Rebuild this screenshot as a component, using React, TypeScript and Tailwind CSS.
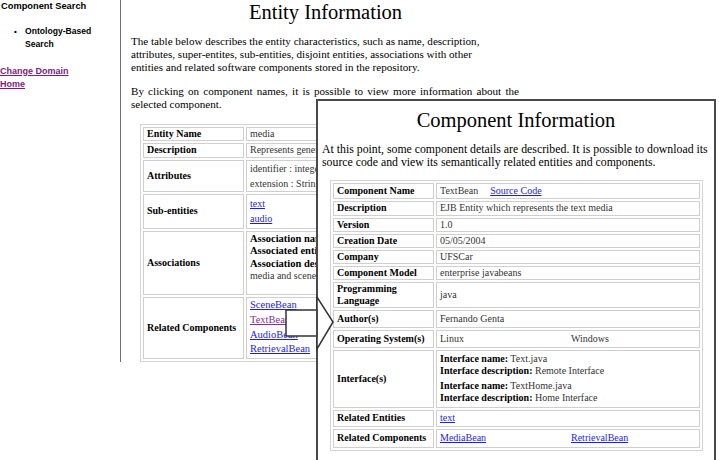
import React from "react";

const serif = { fontFamily: '"Liberation Serif", "Times New Roman", serif' };
const sans = { fontFamily: '"Liberation Sans", Arial, sans-serif' };

function Label({ children, h }: { children: React.ReactNode; h: string }) {
  return (
    <td
      className={`border border-[#cfcfcf] px-[3px] py-0 align-middle font-bold text-[10px] leading-[12px] text-black whitespace-nowrap ${h}`}
      style={serif}
    >
      {children}
    </td>
  );
}

function Val({ children, top = false }: { children: React.ReactNode; top?: boolean }) {
  return (
    <td
      className={`border border-[#cfcfcf] px-[3px] py-0 text-[10px] leading-[12px] text-[#333] ${
        top ? "align-top" : "align-middle"
      }`}
      style={serif}
    >
      {children}
    </td>
  );
}

function Link({ children, visited = false }: { children: React.ReactNode; visited?: boolean }) {
  return (
    <a className={`underline ${visited ? "text-[#8e2c8e]" : "text-[#1c1cf0]"}`} href="#">
      {children}
    </a>
  );
}

function EntityTable() {
  return (
    <div className="mt-[13px] ml-[9px] w-[176px] overflow-hidden">
      <table
        className="w-[380px] border-separate border-spacing-[2px] border border-[#d4d4d4]"
        style={serif}
      >
        <tbody>
          <tr>
            <Label h="h-[14px] w-[101px]">Entity Name</Label>
            <Val>media</Val>
          </tr>
          <tr>
            <Label h="h-[15px]">Description</Label>
            <Val>
              <span className="whitespace-nowrap">Represents general media components</span>
            </Val>
          </tr>
          <tr>
            <Label h="h-[32px]">Attributes</Label>
            <Val>
              <div className="leading-[15px]">identifier : integer</div>
              <div className="leading-[15px]">extension : String</div>
            </Val>
          </tr>
          <tr>
            <Label h="h-[35px]">Sub-entities</Label>
            <Val>
              <div className="leading-[15px]">
                <Link>text</Link>
              </div>
              <div className="leading-[15px]">
                <Link>audio</Link>
              </div>
            </Val>
          </tr>
          <tr>
            <Label h="h-[64px]">Associations</Label>
            <Val top>
              <div className="pt-[1px] leading-[12.5px] whitespace-nowrap">
                <div className="font-bold text-black text-[10.5px]">Association name: composition</div>
                <div className="font-bold text-black text-[10.5px]">Associated entity: scene</div>
                <div className="font-bold text-black text-[10.5px]">Association description:</div>
                <div>media and scene relationship</div>
              </div>
            </Val>
          </tr>
          <tr>
            <Label h="h-[62px]">Related Components</Label>
            <Val>
              <div className="leading-[14.7px] text-[10.5px]">
                <div>
                  <Link>SceneBean</Link>
                </div>
                <div>
                  <Link visited>TextBean</Link>
                </div>
                <div>
                  <Link>AudioBean</Link>
                </div>
                <div>
                  <Link>RetrievalBean</Link>
                </div>
              </div>
            </Val>
          </tr>
        </tbody>
      </table>
    </div>
  );
}

function ComponentTable() {
  return (
    <table
      className="mt-[11px] ml-[12px] w-[373px] border-separate border-spacing-[2px] border border-[#d4d4d4]"
      style={serif}
    >
      <tbody>
        <tr>
          <Label h="h-[16px] w-[101px]">Component Name</Label>
          <Val>
            TextBean<span className="inline-block w-[12px]" />
            <Link>Source Code</Link>
          </Val>
        </tr>
        <tr>
          <Label h="h-[15px]">Description</Label>
          <Val>EJB Entity which represents the text media</Val>
        </tr>
        <tr>
          <Label h="h-[14px]">Version</Label>
          <Val>1.0</Val>
        </tr>
        <tr>
          <Label h="h-[14px]">Creation Date</Label>
          <Val>05/05/2004</Val>
        </tr>
        <tr>
          <Label h="h-[14px]">Company</Label>
          <Val>UFSCar</Val>
        </tr>
        <tr>
          <Label h="h-[14px]">Component Model</Label>
          <Val>enterprise javabeans</Val>
        </tr>
        <tr>
          <Label h="h-[26px]">
            Programming
            <br />
            Language
          </Label>
          <Val>java</Val>
        </tr>
        <tr>
          <Label h="h-[18px]">Author(s)</Label>
          <Val>Fernando Genta</Val>
        </tr>
        <tr>
          <Label h="h-[18px]">Operating System(s)</Label>
          <Val>
            <span className="inline-block w-[131px]">Linux</span>
            <span>Windows</span>
          </Val>
        </tr>
        <tr>
          <Label h="h-[58px]">Interface(s)</Label>
          <Val>
            <div className="flex flex-col gap-[3px]">
              <div>
                <div>
                  <b className="text-black">Interface name:</b> Text.java
                </div>
                <div>
                  <b className="text-black">Interface description:</b> Remote Interface
                </div>
              </div>
              <div>
                <div>
                  <b className="text-black">Interface name:</b> TextHome.java
                </div>
                <div>
                  <b className="text-black">Interface description:</b> Home Interface
                </div>
              </div>
            </div>
          </Val>
        </tr>
        <tr>
          <Label h="h-[17px]">Related Entities</Label>
          <Val>
            <Link>text</Link>
          </Val>
        </tr>
        <tr>
          <Label h="h-[19px]">Related Components</Label>
          <Val>
            <span className="inline-block w-[131px]">
              <Link>MediaBean</Link>
            </span>
            <Link>RetrievalBean</Link>
          </Val>
        </tr>
      </tbody>
    </table>
  );
}

export default function App() {
  return (
    <div className="relative w-[719px] h-[460px] overflow-hidden bg-white text-black" style={serif}>
      <div className="flex h-[362px]">
        {/* navigation frame */}
        <aside className="w-[121px] shrink-0 border-r border-[#6e6e6e]" style={sans}>
          <div className="pl-[1px] text-[9.3px] leading-[12px] font-bold">Component Search</div>
          <ul className="mt-[12.5px] font-bold text-[8.6px] leading-[13px]">
            <li className="flex">
              <span className="w-[25px] shrink-0 pl-[14px] text-[8px]">•</span>
              <span>
                Ontology-Based
                <br />
                Search
              </span>
            </li>
          </ul>
          <div className="mt-[14px] font-bold text-[9px] leading-[13px] text-[#7e1a80]">
            <div>
              <a href="#" className="underline">
                Change Domain
              </a>
            </div>
            <div>
              <a href="#" className="underline">
                Home
              </a>
            </div>
          </div>
        </aside>

        {/* entity page */}
        <main className="flex-1 pl-[10px]">
          <div className="w-[389px]">
            <h1 className="text-center text-[20.5px] leading-[24px]">Entity Information</h1>
            <p className="mt-[10.5px] text-[11.1px] leading-[13px] whitespace-nowrap">
              The table below describes the entity characteristics, such as name, description,
              <br />
              attributes, super-entites, sub-entities, disjoint entities, associations with other
              <br />
              entities and related software components stored in the repository.
            </p>
            <p className="mt-[11px] text-[11.1px] leading-[13px] whitespace-nowrap">
              <span className="[word-spacing:1.4px]">
                By clicking on component names, it is possible to view more information about the
              </span>
              <br />
              selected component.
            </p>
          </div>
          <EntityTable />
        </main>
      </div>

      {/* component window */}
      <section className="absolute left-[316px] top-[99px] w-[400px] h-[370px] border-2 border-b-0 border-[#4a4a4a] bg-white">
        <h2 className="pt-[7px] text-center text-[20.5px] leading-[24px]">Component Information</h2>
        <p className="mt-[10.5px] pl-[4px] text-[11.8px] leading-[13px] whitespace-nowrap">
          At this point, some component details are described. It is possible to download its
          <br />
          source code and view its semantically related entities and components.
        </p>
        <ComponentTable />
      </section>

      {/* block arrow pointing into the component window */}
      <svg className="absolute left-0 top-0" width="719" height="460" viewBox="0 0 719 460">
        <polygon
          points="286,310 317,310 317,297 333,322 317,349 317,336 286,336"
          fill="white"
          stroke="#333"
          strokeWidth="1.5"
          strokeLinejoin="miter"
        />
        <line x1="317" y1="309" x2="317" y2="337" stroke="#4a4a4a" strokeWidth="2" />
      </svg>
    </div>
  );
}
